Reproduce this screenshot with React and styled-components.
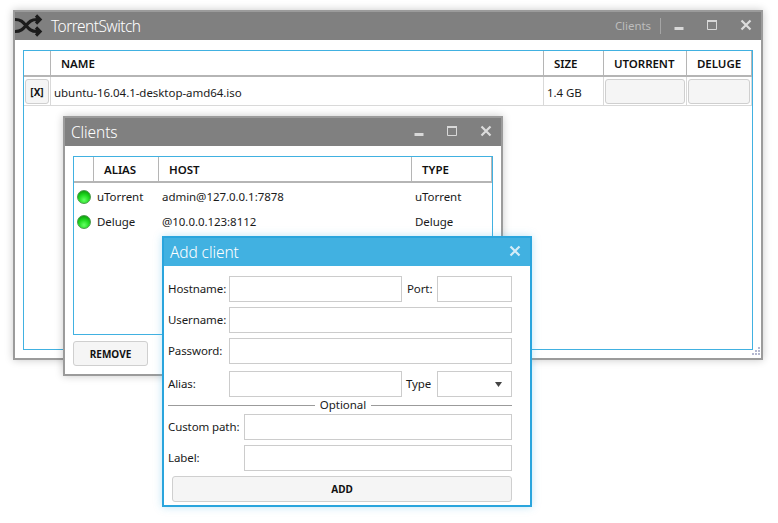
import React from "react";
import styled, { createGlobalStyle } from "styled-components";

const GlobalStyle = createGlobalStyle`
  html, body {
    margin: 0;
    padding: 0;
    background: #fff;
  }
  body {
    font-family: "Noto Sans", "Open Sans", sans-serif;
    font-size: 11.5px;
    letter-spacing: -0.05px;
    color: #1a1a1a;
  }
`;

const Desktop = styled.div`
  position: relative;
  width: 778px;
  height: 523px;
  overflow: hidden;
`;

// windows sit on a free canvas, so they are the only thing placed by offset
const Window = styled.div`
  position: absolute;
  left: ${(p) => p.$left}px;
  top: ${(p) => p.$top}px;
  width: ${(p) => p.$width}px;
  height: ${(p) => p.$height}px;
  box-sizing: border-box;
  display: flex;
  flex-direction: column;
  background: #fff;
  border: 2px solid ${(p) => (p.$accent ? "#2aa5dd" : "#9b9b9b")};
  box-shadow: 0 0 8px ${(p) => (p.$accent ? "rgba(65, 177, 225, 0.35)" : "rgba(0, 0, 0, 0.22)")};
`;

const TitleBar = styled.div`
  flex: none;
  height: 28px;
  display: flex;
  align-items: center;
  background: ${(p) => (p.$accent ? "#41b1e1" : "#808080")};
  color: #fff;
`;

const Title = styled.div`
  font-size: 15.5px;
  font-weight: 300;
  letter-spacing: ${(p) => (p.$tight ? "-0.55px" : "-0.1px")};
  margin-left: ${(p) => p.$indent}px;
  flex: 1;
`;

const AppIcon = styled.svg`
  width: 28px;
  height: 28px;
  flex: none;
`;

const TitleLink = styled.div`
  font-size: 11.5px;
  color: #bdbdbd;
  padding-right: 9px;
  margin-right: 3px;
  border-right: 1px solid #a5a5a5;
  line-height: 16px;
`;

const Control = styled.div`
  flex: none;
  align-self: flex-start;
  width: ${(p) => p.$w}px;
  height: 26px;
  display: flex;
  align-items: center;
  justify-content: center;
`;

const ControlIcon = styled.svg`
  display: block;
`;

const MainBody = styled.div`
  flex: 1;
  min-height: 0;
  display: flex;
  flex-direction: column;
  padding: 10px 8px 8px 8px;
  position: relative;
`;

const ClientsBody = styled(MainBody)`
  gap: 6px;
`;

const TableFrame = styled.div`
  flex: 1;
  min-height: 0;
  border: 1px solid #41b1e1;
`;

const HeaderRow = styled.div`
  display: grid;
  grid-template-columns: ${(p) => p.$cols};
  height: 26px;
  box-sizing: border-box;
  border-bottom: 2px solid #b5b5b5;
`;

const HeaderCell = styled.div`
  border-right: 1px solid #b5b5b5;
  padding-left: 10px;
  font-weight: 600;
  font-size: 11.5px;
  line-height: 26px;
  height: 24px;
  color: #111;
`;

const DataRow = styled.div`
  display: grid;
  grid-template-columns: ${(p) => p.$cols};
  height: 29px;
  box-sizing: border-box;
  border-bottom: 1px solid #d9d9d9;
`;

const DataCell = styled.div`
  border-right: 1px solid #d9d9d9;
  display: flex;
  align-items: center;
  justify-content: ${(p) => (p.$center ? "center" : "flex-start")};
  padding-left: ${(p) => p.$pad || 0}px;
  padding-top: ${(p) => (p.$pad ? 2 : 0)}px;
`;

const ClientList = styled.div`
  padding-top: 1px;
`;

const ClientRow = styled.div`
  display: grid;
  grid-template-columns: ${(p) => p.$cols};
  height: 25px;
  align-items: center;
`;

const ClientText = styled.div`
  padding-left: 3px;
`;

const Led = styled.div`
  width: 14px;
  height: 14px;
  margin-left: 3px;
  box-sizing: border-box;
  border-radius: 50%;
  border: 1px solid #4a9a4a;
  background: radial-gradient(circle at 50% 75%, #66ff66 0%, #22dd22 45%, #0ea60e 80%, #3e9a3e 100%);
`;

const Button = styled.button`
  box-sizing: border-box;
  display: block;
  padding: ${(p) => (p.$low ? "2px 0 0" : 0)};
  font-family: inherit;
  font-weight: 700;
  font-size: 10px;
  letter-spacing: 0;
  color: #111;
  background: #f5f5f5;
  border: 1px solid #cfcfcf;
  border-radius: 3px;
  width: ${(p) => p.$width};
  height: ${(p) => p.$height || 25}px;
  margin: ${(p) => p.$margin || 0};
`;

const Form = styled.div`
  flex: 1;
  display: flex;
  flex-direction: column;
  padding: 10px 18px 0 4px;
`;

const FieldRow = styled.div`
  display: grid;
  grid-template-columns: ${(p) => p.$cols};
  height: 26px;
  margin-top: ${(p) => p.$top || 0}px;
  align-items: stretch;
`;

const Label = styled.label`
  display: flex;
  align-items: center;
  white-space: nowrap;
  letter-spacing: -0.1px;
  padding-left: ${(p) => p.$pad || 0}px;
  padding-bottom: 2px;
`;

const Input = styled.input`
  box-sizing: border-box;
  width: 100%;
  height: 26px;
  padding: 0 4px;
  border: 1px solid #cccccc;
  background: #fff;
  outline: none;
`;

const Select = styled.div`
  box-sizing: border-box;
  height: 26px;
  border: 1px solid #cccccc;
  display: flex;
  align-items: center;
  justify-content: flex-end;
  padding-right: 9px;
`;

const Divider = styled.div`
  display: flex;
  align-items: center;
  height: 17px;
`;

const DividerLine = styled.div`
  height: 1px;
  background: #9b9b9b;
  flex: ${(p) => (p.$width ? "none" : 1)};
  width: ${(p) => p.$width || 0}px;
`;

const DividerText = styled.div`
  width: 56px;
  text-align: center;
  margin-top: -3px;
`;

const Grip = styled.svg`
  position: absolute;
  right: 0;
  bottom: 0;
`;

function ShuffleLogo() {
  return (
    <AppIcon viewBox="0 0 28 28" fill="none" stroke="#1c1c1c" strokeWidth="3.2">
      <path d="M0 7.5c6 0 8 2.5 11 6s5 6 11 6h2" />
      <path d="M0 19.5c6 0 8-2.5 11-6s5-6 11-6h2" />
      <path d="M21 3.5l4 4-4 4" />
      <path d="M21 15.5l4 4-4 4" />
    </AppIcon>
  );
}

function CloseGlyph({ color }) {
  return (
    <ControlIcon width="12" height="12" viewBox="0 0 12 12">
      <path d="M1.5 1.5l9 9M10.5 1.5l-9 9" stroke={color} strokeWidth="2.2" />
    </ControlIcon>
  );
}

function WindowControls() {
  return (
    <>
      <Control $w={29}>
        <ControlIcon width="10" height="10" viewBox="0 0 10 10">
          <rect x="0.5" y="7" width="9" height="3" fill="#d8d8d8" />
        </ControlIcon>
      </Control>
      <Control $w={38}>
        <ControlIcon width="10" height="10" viewBox="0 0 10 10">
          <path d="M0.5 0.5h9v9h-9z" fill="none" stroke="#d8d8d8" />
          <rect x="0" y="0" width="10" height="2" fill="#d8d8d8" />
        </ControlIcon>
      </Control>
      <Control $w={30}>
        <CloseGlyph color="#dcdcdc" />
      </Control>
    </>
  );
}

const torrentCols = "27px 493px 60px 83px 1fr";
const clientCols = "20px 65px 253px 80px";

const clients = [
  { alias: "uTorrent", host: "admin@127.0.0.1:7878", type: "uTorrent" },
  { alias: "Deluge", host: "@10.0.0.123:8112", type: "Deluge" },
];

export default function App() {
  return (
    <Desktop>
      <GlobalStyle />

      <Window $left={13} $top={10} $width={750} $height={350}>
        <TitleBar>
          <ShuffleLogo />
          <Title $indent={8} $tight>TorrentSwitch</Title>
          <TitleLink>Clients</TitleLink>
          <WindowControls />
        </TitleBar>
        <MainBody>
          <TableFrame>
            <HeaderRow $cols={torrentCols}>
              <HeaderCell />
              <HeaderCell>NAME</HeaderCell>
              <HeaderCell>SIZE</HeaderCell>
              <HeaderCell>UTORRENT</HeaderCell>
              <HeaderCell>DELUGE</HeaderCell>
            </HeaderRow>
            <DataRow $cols={torrentCols}>
              <DataCell $center>
                <Button $width="24px" $low>[X]</Button>
              </DataCell>
              <DataCell $pad={3}>ubuntu-16.04.1-desktop-amd64.iso</DataCell>
              <DataCell $pad={3}>1.4 GB</DataCell>
              <DataCell $center>
                <Button $width="80px" />
              </DataCell>
              <DataCell $center>
                <Button $width="62px" />
              </DataCell>
            </DataRow>
          </TableFrame>
          <Grip width="12" height="12" viewBox="0 0 12 12" fill="#b4b8d0">
            <rect x="9" y="1" width="2" height="2" />
            <rect x="6" y="4" width="2" height="2" />
            <rect x="9" y="4" width="2" height="2" />
            <rect x="3" y="7" width="2" height="2" />
            <rect x="6" y="7" width="2" height="2" />
            <rect x="9" y="7" width="2" height="2" />
          </Grip>
        </MainBody>
      </Window>

      <Window $left={63} $top={116} $width={440} $height={260}>
        <TitleBar>
          <Title $indent={6}>Clients</Title>
          <WindowControls />
        </TitleBar>
        <ClientsBody>
          <TableFrame>
            <HeaderRow $cols={clientCols}>
              <HeaderCell />
              <HeaderCell>ALIAS</HeaderCell>
              <HeaderCell>HOST</HeaderCell>
              <HeaderCell>TYPE</HeaderCell>
            </HeaderRow>
            <ClientList>
              {clients.map((c) => (
                <ClientRow $cols={clientCols} key={c.alias}>
                  <Led />
                  <ClientText>{c.alias}</ClientText>
                  <ClientText>{c.host}</ClientText>
                  <ClientText>{c.type}</ClientText>
                </ClientRow>
              ))}
            </ClientList>
          </TableFrame>
          <Button $width="75px">REMOVE</Button>
        </ClientsBody>
      </Window>

      <Window $left={162} $top={236} $width={370} $height={271} $accent>
        <TitleBar $accent>
          <Title $indent={6}>Add client</Title>
          <Control $w={30}>
            <CloseGlyph color="#d4ecf8" />
          </Control>
        </TitleBar>
        <Form>
          <FieldRow $cols="61px 173px 35px 75px">
            <Label>Hostname:</Label>
            <Input />
            <Label $pad={5}>Port:</Label>
            <Input />
          </FieldRow>
          <FieldRow $cols="61px 1fr" $top={5}>
            <Label>Username:</Label>
            <Input />
          </FieldRow>
          <FieldRow $cols="61px 1fr" $top={5}>
            <Label>Password:</Label>
            <Input />
          </FieldRow>
          <FieldRow $cols="61px 173px 35px 75px" $top={7}>
            <Label>Alias:</Label>
            <Input />
            <Label $pad={4}>Type</Label>
            <Select>
              <svg width="7" height="5" viewBox="0 0 7 5">
                <path d="M0 0h7L3.5 5z" fill="#444" />
              </svg>
            </Select>
          </FieldRow>
          <Divider>
            <DividerLine $width={147} />
            <DividerText>Optional</DividerText>
            <DividerLine />
          </Divider>
          <FieldRow $cols="76px 1fr">
            <Label>Custom path:</Label>
            <Input />
          </FieldRow>
          <FieldRow $cols="76px 1fr" $top={5}>
            <Label>Label:</Label>
            <Input />
          </FieldRow>
          <Button $width="340px" $height={26} $margin="5px 0 0 4px">ADD</Button>
        </Form>
      </Window>
    </Desktop>
  );
}
